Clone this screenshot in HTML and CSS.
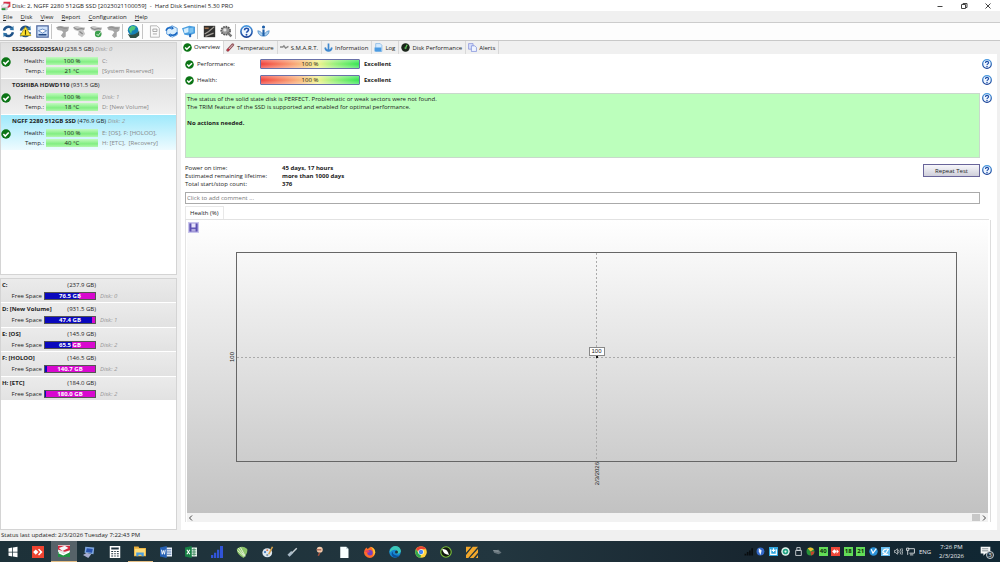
FILE: index.html
```html
<!DOCTYPE html>
<html lang="en">
<head>
<meta charset="utf-8">
<title>Hard Disk Sentinel 5.30 PRO</title>
<link rel="stylesheet" href="styles.css">
</head>
<body>
<svg class="defs" width="0" height="0" aria-hidden="true">
  <defs>
    <linearGradient id="blue" x1="0" y1="0" x2="0" y2="1"><stop offset="0" stop-color="#4a9ae0"/><stop offset="1" stop-color="#173f95"/></linearGradient>
    <symbol id="ok" viewBox="0 0 16 16"><circle cx="8" cy="8" r="7.6" fill="#0b7415"/><path d="M3.8 8l3 3.2 5.6-5.6" fill="none" stroke="#fff" stroke-width="2.6"/></symbol>
    <symbol id="help" viewBox="0 0 16 16"><circle cx="8" cy="8" r="6.9" fill="#eef6ff" stroke="url(#blue)" stroke-width="2"/><path d="M5.6 6.4c0-3.4 5-3.2 4.900-.3 0 1.700-2.400 1.700-2.400 3.500" fill="none" stroke="#1d4da8" stroke-width="1.9"/><circle cx="8" cy="12" r="1.200" fill="#1d4da8"/></symbol>
    <symbol id="info" viewBox="0 0 16 16"><path d="M1 7c0 9 14 9 14 0l-3 1c-1 3-7 3-8 0z" fill="#a9cfef" stroke="#3b7dbc" stroke-width=".8"/><circle cx="8" cy="2.500" r="1.900" fill="#1d5ea8"/><path d="M8 5.500v8" stroke="#1d5ea8" stroke-width="2.600"/></symbol>
    <symbol id="refresh" viewBox="0 0 16 16"><path d="M13.400 9A5.600 5.600 0 0 1 4 12M2.500 7A5.600 5.600 0 0 1 12 3.800" fill="none" stroke="#1e5288" stroke-width="3"/><path d="M1.500 9.500l5 .5-4.500 5zM14.500 6.500l-5-.5L14 1z" fill="#2d74a8"/></symbol>
    <symbol id="drive" viewBox="0 0 16 16"><path d="M4 1h11v8l-4 2H4z" fill="#d93048"/><path d="M1 7l5-3 7 1-3 5H1z" fill="#f3f4f6" stroke="#b5b5bc" stroke-width=".8"/><path d="M1 10h10v4l-3 1H1z" fill="#c9ccd2"/><path d="M1 13h6" stroke="#279335" stroke-width="3"/></symbol>
    <symbol id="tool" viewBox="0 0 16 16"><path d="M0 3q5-3 10-1h6l-1 5-3 2v5l-3 2-3-3 3-4-2-2-5-1z" fill="#a6a6a6"/><path d="M2 3q4-1 8 1h4" fill="none" stroke="#8a8a8a"/></symbol>
    <symbol id="chain" viewBox="0 0 16 16"><path d="M0 3q4-3 8-1l7 1-2 4 2 4-4 4-5-3 1-4-5-2z" fill="#c6c6c6"/><path d="M1 3q3 3 6 2t7 0M8 8l4 3" fill="none" stroke="#8a8a8a" stroke-width="1.500"/></symbol>
    <symbol id="globe" viewBox="0 0 16 16"><circle cx="7.500" cy="6.500" r="6.500" fill="#1680b4"/><path d="M2 5l4-4 5 1-2 4-3 1-1 4z" fill="#53c87a"/><path d="M1 11q8 3 14-4v6l-4 3H4z" fill="#315044"/></symbol>
    <symbol id="page" viewBox="0 0 16 16"><path d="M3 1h8l3 3v11H3z" fill="#fafafa" stroke="#aaa"/><path d="M6 5h5v3H6zM6 11h5" fill="none" stroke="#999"/></symbol>
    <symbol id="screens" viewBox="0 0 16 16"><path d="M0 4l9-3 7 1v8l-7 3-6-1z" fill="#4a9ee0"/><path d="M2 5l6-2v6l-5 1z" fill="#d5eefd"/><path d="M9 4l5-1v6l-5 1z" fill="#7cc3f1"/><path d="M10 11v4" stroke="#2466b8" stroke-width="2.500"/></symbol>
    <symbol id="temp" viewBox="0 0 16 16"><path d="M3 13L12 3" stroke="#93555b" stroke-width="5" stroke-linecap="round"/><path d="M4 12L12 3" stroke="#f1dede" stroke-width="1.500"/><circle cx="4" cy="12" r="2" fill="#c3273c"/></symbol>
    <symbol id="copy" viewBox="0 0 16 16"><path d="M1 1h8v10H1z" fill="#d8e0fb" stroke="#6c79d6"/><path d="M6 5h6l3 3v7H6z" fill="#eff4ff" stroke="#596fd0"/></symbol>
  </defs>
</svg>

<header class="titlebar">
  <svg class="i10"><use href="#drive"/></svg>
  <span class="caption">Disk: 2, NGFF 2280 512GB SSD [2023021100059] &nbsp;- &nbsp;Hard Disk Sentinel 5.30 PRO</span>
  <div class="winctl">
    <button aria-label="Minimize"><svg viewBox="0 0 8 8"><path d="M1.500 4.500h5"/></svg></button>
    <button aria-label="Restore"><svg viewBox="0 0 8 8"><path d="M1.500 2.500h4v4h-4zM3 2.500v-1h4v4H5.500"/></svg></button>
    <button aria-label="Close"><svg viewBox="0 0 8 8"><path d="M1.500 1.500l5 5m0-5l-5 5"/></svg></button>
  </div>
</header>

<nav class="menubar">
  <button><u>F</u>ile</button><button><u>D</u>isk</button><button><u>V</u>iew</button><button><u>R</u>eport</button><button><u>C</u>onfiguration</button><button><u>H</u>elp</button>
</nav>

<div class="toolbar">
  <button aria-label="Refresh"><svg class="i13"><use href="#refresh"/></svg></button>
  <button aria-label="Refresh now"><svg class="i13" viewBox="0 0 16 16"><use href="#refresh"/><path d="M8 2l6.500 11h-13z" fill="#ffe22d" stroke="#a79313"/><path d="M8 6v6" stroke="#4b4200" stroke-width="1.500"/></svg></button>
  <button aria-label="Disk report"><svg class="i13" viewBox="0 0 16 16"><path d="M1 1h14v14H1z" fill="#cfe2fa" stroke="#4d679e" stroke-width="1.500"/><path d="M3 7l5-2 5 2-5 3z" fill="#fff" stroke="#537bb9"/><path d="M3 12h10" stroke="#224884" stroke-width="2"/></svg></button>
  <i class="sep"></i>
  <button aria-label="Short test"><svg class="i13"><use href="#tool"/></svg></button>
  <button aria-label="Extended test"><svg class="i13"><use href="#chain"/></svg></button>
  <button aria-label="Surface test"><svg class="i13" viewBox="0 0 16 16"><use href="#chain"/><circle cx="10" cy="11" r="4" fill="#3aa04b"/><path d="M8 11l2 2 3-4" fill="none" stroke="#fff"/></svg></button>
  <button aria-label="Seek test"><svg class="i13"><use href="#tool"/></svg></button>
  <i class="sep"></i>
  <button aria-label="Online"><svg class="i13"><use href="#globe"/></svg></button>
  <i class="sep wide"></i>
  <button aria-label="Report"><svg class="i13"><use href="#page"/></svg></button>
  <button aria-label="Send report"><svg class="i13" viewBox="0 0 16 16"><path d="M2 4l7-3 6 3v8l-6 3-7-4z" fill="#d8edfc" stroke="#4d93d8"/><path d="M1 7q3-5 7-3M15 9q-3 5-8 3" fill="none" stroke="#1766c2" stroke-width="2"/><path d="M8 1v5l3-2zM7 15v-5l-3 2z" fill="#1766c2"/></svg></button>
  <button aria-label="Network"><svg class="i13"><use href="#screens"/></svg></button>
  <i class="sep wide"></i>
  <button aria-label="Disk panel"><svg class="i13" viewBox="0 0 16 16"><path d="M1 1h14v14H1z" fill="#30302f"/><path d="M2 11l5-3 7-6M3 14l10-4" stroke="#a5a09a" stroke-width="1.500"/><path d="M2 4h5" stroke="#9a6a48" stroke-width="2"/></svg></button>
  <button aria-label="Settings"><svg class="i13" viewBox="0 0 16 16"><ellipse cx="7" cy="7" rx="5.500" ry="5" fill="#999" stroke="#555" stroke-width="2" stroke-dasharray="2 1"/><circle cx="6" cy="6" r="2" fill="#e5e5e5"/><path d="M9 9l5 5" stroke="#777" stroke-width="3"/></svg></button>
  <i class="sep"></i>
  <button aria-label="Help"><svg class="i13"><use href="#help"/></svg></button>
  <button aria-label="About"><svg class="i13"><use href="#info"/></svg></button>
</div>

<main class="main">
  <aside class="side">
    <section class="panel disks">
      <article class="disk">
        <h3>ES256GSSD25SAU <span>(238.5 GB)</span> <em>Disk: 0</em></h3>
        <div class="facts"><svg class="i10 state"><use href="#ok"/></svg>
          <span class="k">Health:</span><span class="meter">100 %</span><span class="v">C:</span>
          <span class="k">Temp.:</span><span class="meter">21 °C</span><span class="v">[System Reserved]</span></div>
      </article>
      <article class="disk">
        <h3>TOSHIBA HDWD110 <span>(931.5 GB)</span></h3>
        <div class="facts"><svg class="i10 state"><use href="#ok"/></svg>
          <span class="k">Health:</span><span class="meter">100 %</span><span class="v"><em>Disk: 1</em></span>
          <span class="k">Temp.:</span><span class="meter">18 °C</span><span class="v">D: [New Volume]</span></div>
      </article>
      <article class="disk selected">
        <h3>NGFF 2280 512GB SSD <span>(476.9 GB)</span> <em>Disk: 2</em></h3>
        <div class="facts"><svg class="i10 state"><use href="#ok"/></svg>
          <span class="k">Health:</span><span class="meter">100 %</span><span class="v">E: [OS], F: [HOLOO],</span>
          <span class="k">Temp.:</span><span class="meter">40 °C</span><span class="v">H: [ETC],&nbsp; [Recovery]</span></div>
      </article>
    </section>
    <section class="panel volumes">
      <div class="vols">
        <article class="vol"><b>C:</b><span class="size">(237.9 GB)</span><span class="k">Free Space</span><span class="free" style="--used:68%">76.5 GB</span><em>Disk: 0</em></article>
        <article class="vol"><b>D: [New Volume]</b><span class="size">(931.5 GB)</span><span class="k">Free Space</span><span class="free" style="--used:95%">47.4 GB</span><em>Disk: 1</em></article>
        <article class="vol"><b>E: [OS]</b><span class="size">(145.9 GB)</span><span class="k">Free Space</span><span class="free" style="--used:55%">65.5 GB</span><em>Disk: 2</em></article>
        <article class="vol"><b>F: [HOLOO]</b><span class="size">(146.5 GB)</span><span class="k">Free Space</span><span class="free" style="--used:4%">140.7 GB</span><em>Disk: 2</em></article>
        <article class="vol"><b>H: [ETC]</b><span class="size">(184.0 GB)</span><span class="k">Free Space</span><span class="free" style="--used:2%">180.0 GB</span><em>Disk: 2</em></article>
      </div>
    </section>
  </aside>

  <section class="detail">
    <div class="tabs">
      <button class="tab active"><svg class="i9"><use href="#ok"/></svg>Overview</button>
      <button class="tab"><svg class="i9"><use href="#temp"/></svg>Temperature</button>
      <button class="tab"><svg class="i9" viewBox="0 0 16 16"><path d="M0 7h5l2-2 3 4 5-3" fill="none" stroke="#888" stroke-width="2.500"/></svg>S.M.A.R.T.</button>
      <button class="tab"><svg class="i9" viewBox="0 0 16 16"><path d="M8 1v13M2 8q1 6 6 6t6-6" fill="none" stroke="#3f88cf" stroke-width="3"/></svg>Information</button>
      <button class="tab"><svg class="i9" viewBox="0 0 16 16"><path d="M3 1h8l3 3v11H3z" fill="#d5ebff" stroke="#68a5dd"/><path d="M1 8h12v7H1z" fill="#4b9be2"/></svg>Log</button>
      <button class="tab"><svg class="i9" viewBox="0 0 16 16"><circle cx="8" cy="8" r="7.500" fill="#1a251a"/><path d="M8 9l3-6" stroke="#62d95c" stroke-width="2"/><circle cx="8" cy="9" r="2" fill="#59a85b"/></svg>Disk Performance</button>
      <button class="tab"><svg class="i9"><use href="#copy"/></svg>Alerts</button>
    </div>
    <div class="page">
      <div class="row"><div class="rate"><svg class="i9"><use href="#ok"/></svg><span>Performance:</span><span class="grade">100 %</span><b>Excellent</b></div><button class="q" aria-label="Help"><svg class="i10"><use href="#help"/></svg></button></div>
      <div class="row"><div class="rate"><svg class="i9"><use href="#ok"/></svg><span>Health:</span><span class="grade">100 %</span><b>Excellent</b></div><button class="q" aria-label="Help"><svg class="i10"><use href="#help"/></svg></button></div>
      <div class="row status-row">
        <div class="verdict"><p>The status of the solid state disk is PERFECT. Problematic or weak sectors were not found.</p><p>The TRIM feature of the SSD is supported and enabled for optimal performance.</p><p class="act">No actions needed.</p></div>
        <button class="q" aria-label="Help"><svg class="i10"><use href="#help"/></svg></button>
      </div>
      <div class="row stat-row">
        <div class="stats">
          <dl><dt>Power on time:</dt><dd>45 days, 17 hours</dd><dt>Estimated remaining lifetime:</dt><dd>more than 1000 days</dd><dt>Total start/stop count:</dt><dd>376</dd></dl>
          <button class="repeat">Repeat Test</button>
        </div>
        <button class="q" aria-label="Help"><svg class="i10"><use href="#help"/></svg></button>
      </div>
      <div class="row comment-row"><input class="comment" type="text" aria-label="Comment" placeholder="Click to add comment ..."></div>
      <div class="subtabs"><button class="subtab">Health (%)</button></div>
      <div class="frame">
        <div class="chart">
          <button class="save" aria-label="Save chart"><svg viewBox="0 0 16 16"><path d="M0 0h16v16H0z" fill="#c9c5ec"/><path d="M2 2h12v12H2z" fill="#5b4fb2"/><path d="M5 2h6v6H5z" fill="#e6e3fa"/><path d="M5 10h6v4H5z" fill="#b3abe0"/></svg></button>
          <div class="plot">
            <span class="ylab">100</span><span class="point"></span><span class="tip">100</span><span class="xlab">2/3/2026</span>
          </div>
        </div>
        <div class="hscroll"><button aria-label="Scroll left"><svg viewBox="0 0 8 8"><path d="M5 1.500L2.500 4 5 6.500"/></svg></button><i class="thumb"></i><button aria-label="Scroll right"><svg viewBox="0 0 8 8"><path d="M3 1.500L5.500 4 3 6.500"/></svg></button></div>
      </div>
    </div>
  </section>
</main>

<footer class="statusbar">Status last updated: 2/3/2026 Tuesday 7:22:43 PM</footer>

<div class="taskbar">
  <div class="apps">
    <button aria-label="Start"><svg viewBox="0 0 16 16"><path d="M2 3l5-1v5.500H2zM8 2l6-1v6.500H8zM2 8.500h5V14l-5-1zM8 8.500h6V15l-6-1z" fill="#fff"/></svg></button>
    <button aria-label="AnyDesk"><svg viewBox="0 0 16 16"><path d="M0 0h16v16H0z" fill="#ef4431"/><path d="M1.500 8L5 4.500 8.500 8 5 11.500z" fill="#fff"/><path d="M8 4.500l1.500-1L14 8l-4.500 4.500L8 11.500 11 8z" fill="#fff"/></svg></button>
    <button class="current" aria-label="Hard Disk Sentinel"><svg viewBox="0 0 16 16"><path d="M0 0h16v16H0z" fill="#e9e5e5"/><path d="M0 1h16v6L9 9 0 6z" fill="#d3263c"/><path d="M1 4l8-3 5 3-8 4z" fill="#f5f7f9"/><path d="M0 16V9l6 3 10-3v7z" fill="#209343"/><path d="M1 10l6 3 8-4" stroke="#fff" stroke-width="2" fill="none"/></svg></button>
    <button aria-label="Remote desktop"><svg viewBox="0 0 16 16"><path d="M3 1l12 1-1 9-12-2z" fill="#7fa6dd"/><path d="M5 3l8 1-1 5-8-1z" fill="#2852ae"/><path d="M0 12l5-3 6 2-4 5z" fill="#a7add0"/></svg></button>
    <button aria-label="Calculator"><svg viewBox="0 0 16 16"><path d="M1 0h14v16H1z" fill="#fff"/><path d="M3 2h10v2.500H3zM3 6.500h2.500V8H3zM7 6.500h2V8H7zM10.500 6.500H13V8h-2.500zM3 9.500h2.500V11H3zM7 9.500h2V11H7zM10.500 9.500H13V11h-2.500zM3 12.500h2.500V14H3zM7 12.500h2V14H7zM10.500 12.500H13V14h-2.500z" fill="#21333f"/></svg></button>
    <button class="open" aria-label="File Explorer"><svg viewBox="0 0 16 16"><path d="M0 2h6l1 2h9v11H0z" fill="#e9ae3c"/><path d="M1 5h14v9H1z" fill="#ffdc79"/><path d="M3 15v-5h10v5h-3v-2H6v2z" fill="#4c9ede"/></svg></button>
    <button aria-label="Word"><svg viewBox="0 0 16 16"><path d="M8 2h8v12H8z" fill="#e9f0fa"/><path d="M9 5h6M9 8h6M9 11h6" stroke="#2b579a"/><path d="M0 2l9-2v16l-9-2z" fill="#2660b3"/><path d="M2 5l1 6 1.500-5L6 11l1-6" fill="none" stroke="#fff" stroke-width="1.200"/></svg></button>
    <button aria-label="Excel"><svg viewBox="0 0 16 16"><path d="M8 2h8v12H8z" fill="#e8f6ed"/><path d="M9 5h6M9 8h6M9 11h6M12 3v10" stroke="#217346"/><path d="M0 2l9-2v16l-9-2z" fill="#168044"/><path d="M2.500 5l4 6m0-6l-4 6" stroke="#fff" stroke-width="1.500"/></svg></button>
    <button aria-label="Signal"><svg viewBox="0 0 16 16"><path d="M0 12h3v4H0zM4 9h3v7H4zM8 5h3v11H8zM12 0h4v16h-4z" fill="#3154d8"/></svg></button>
    <button aria-label="CorelDRAW"><svg viewBox="0 0 16 16"><path d="M1 4Q8-2 15 4q1 6-5 12Q1 11 1 4" fill="#8cc46a"/><path d="M3 3l9 11M6 2l6 11M2 6l9 8" stroke="#e5f4d8" stroke-width="1.300"/></svg></button>
    <button aria-label="Paint"><svg viewBox="0 0 16 16"><ellipse cx="7" cy="9" rx="6.500" ry="6" fill="#dce7f0"/><circle cx="4" cy="8" r="1.500" fill="#4479bb"/><circle cx="7" cy="5.500" r="1.300" fill="#dc7447"/><circle cx="7" cy="12" r="1.500" fill="#829aac"/><path d="M9 11l5-10" stroke="#dba34c" stroke-width="2"/></svg></button>
    <button aria-label="Screwdriver"><svg viewBox="0 0 16 16"><path d="M2 13l5-5" stroke="#a9bac6" stroke-width="4"/><path d="M7 9l6-6" stroke="#cad2d5" stroke-width="2"/></svg></button>
    <button aria-label="Pin"><svg viewBox="0 0 16 16"><circle cx="9" cy="5" r="4" fill="#f1c8aa"/><path d="M5 5h6" stroke="#b06e5b" stroke-width="2"/><path d="M9 9l-2 4" stroke="#aa533e" stroke-width="2"/></svg></button>
    <button aria-label="Notepad"><svg viewBox="0 0 16 16"><path d="M3 1h8l3 3v12H3z" fill="#f8ffff"/><path d="M11 1v3h3" fill="#b7cbd0"/></svg></button>
    <button aria-label="Firefox"><svg viewBox="0 0 16 16"><path d="M3 2l2 2q2-2 4-3 6 2 6 8-1 6-7 7-7-1-8-7 0-4 3-7z" fill="#ff6b2a"/><path d="M9 1q6 2 6 8l-3 5Q14 6 9 1" fill="#ffc832"/><circle cx="8" cy="9" r="3.600" fill="#7340c3"/><path d="M1 7q4-3 7 1l-3 1z" fill="#f23b5c"/></svg></button>
    <button aria-label="Edge"><svg viewBox="0 0 16 16"><circle cx="8" cy="8" r="7.700" fill="#1688d2"/><path d="M1 7Q2 1 8 0q7 0 8 7-1 4-6 3 2-5-2-5-5 0-7 4" fill="#3bc7b8"/><path d="M5 7q-1 6 9 6-5 4-9 1-3-3 0-7" fill="#0b519c"/><circle cx="10" cy="8" r="2" fill="#203540"/></svg></button>
    <button aria-label="Chrome"><svg viewBox="0 0 16 16"><circle cx="8" cy="8" r="7.800" fill="#ffd13b"/><path d="M1 4Q4 0 8 .2q5 0 7 4H8L5 8z" fill="#e84235"/><path d="M1 4l4 6 3 2-1 4Q1 15 .2 8 .2 6 1 4" fill="#31a852"/><circle cx="8" cy="8" r="3.700" fill="#fff"/><circle cx="8" cy="8" r="2.900" fill="#4285f4"/></svg></button>
    <button aria-label="Corel tools"><svg viewBox="0 0 16 16"><circle cx="8" cy="8" r="7" fill="#12180f" stroke="#7cc13b" stroke-width="1.500"/><path d="M3 4q7-1 9 8-8-1-9-8" fill="#fff"/></svg></button>
    <button aria-label="Stripes"><svg viewBox="0 0 16 16"><path d="M0 1h7L0 9zM9 1h7L3 16H0v-4zM16 4v5l-6 7H5zM16 12v4h-3z" fill="#f2a82c"/></svg></button>
    <button aria-label="Device"><svg viewBox="0 0 16 16"><path d="M3 6l7-1 4 4-4 2-6-2z" fill="#66747b"/><path d="M3 6l7 1" stroke="#a0abb0"/></svg></button>
  </div>
  <div class="tray">
    <div class="trayicons">
      <span><svg viewBox="0 0 16 16"><path d="M1 12h3v3H1zM5 9h3v6H5zM9 6h3v9H9zM13 2h3v13h-3z" fill="#080c0f"/></svg></span>
      <span><svg viewBox="0 0 16 16"><circle cx="8" cy="8" r="7" fill="#3368c9"/><path d="M5 2l5 4-2 8-3-6z" fill="#f0f6ff"/></svg></span>
      <span><svg viewBox="0 0 16 16"><path d="M0 0h16v16H0z" fill="#30a5dd"/><path d="M3 4v9h10V4M8 2v7M5 6h6" fill="none" stroke="#fff" stroke-width="2"/></svg></span>
      <span><svg viewBox="0 0 16 16"><circle cx="8" cy="8" r="7.500" fill="#e5f5ef"/><circle cx="8" cy="8" r="3.500" fill="none" stroke="#20a083" stroke-width="3"/></svg></span>
      <span><svg viewBox="0 0 16 16"><path d="M5 1h6v5H5zM3 6h10v9H3z" fill="none" stroke="#d8dde0" stroke-width="1.500"/></svg></span>
      <span><svg viewBox="0 0 16 16"><circle cx="8" cy="8" r="7" fill="#27923a"/><path d="M8 8L3 2q7-3 11 2z" fill="#efbd32"/><path d="M8 8h7q-1 6-6 7z" fill="#c8412e"/></svg></span>
      <span class="num">40</span>
      <span><svg viewBox="0 0 16 16"><path d="M0 0h16v16H0z" fill="#ed4638"/><path d="M2 8l4-4 4 4-4 4zM10 4l4 4-4 4z" fill="#fff"/></svg></span>
      <span class="num">18</span>
      <span class="num">21</span>
      <span><svg viewBox="0 0 16 16"><circle cx="8" cy="8" r="7.500" fill="#2a91d7"/><path d="M4 4l3 7 6-8" fill="none" stroke="#fff" stroke-width="2"/></svg></span>
      <span><svg viewBox="0 0 16 16"><path d="M0 0h16v16H0z" fill="#65bbed"/><path d="M3 9q2-7 10-5l-5 8zM3 13h10" fill="none" stroke="#fff" stroke-width="2"/></svg></span>
      <span><svg viewBox="0 0 16 16"><path d="M1 6h2l3-3v10L3 10H1zM8 5q2 3 0 6M11 3q3 5 0 10M14 2q3 6 0 12" fill="none" stroke="#e6eaec" stroke-width="1.200"/></svg></span>
      <span><svg viewBox="0 0 16 16"><path d="M4 3h11v8H6M1 2h4v4H1zM3 6v8M7 14h6" fill="none" stroke="#e6eaec" stroke-width="1.500"/></svg></span>
    </div>
    <span class="lang">ENG</span>
    <span class="clock">7:26 PM<br>2/3/2026</span>
    <button class="notes" aria-label="3 notifications"><svg viewBox="0 0 16 16"><path d="M1 1h14v10H8l-3 3v-3H1z" fill="#f4f6f6"/><path d="M3 4h9M3 7h9" stroke="#5b676d"/></svg><span>3</span></button>
  </div>
</div>
</body>
</html>
```
FILE: styles.css
```css
* { box-sizing: border-box; }
html, body { height: 100%; }
body {
  margin: 0;
  display: flex;
  flex-direction: column;
  overflow: hidden;
  background: #f0f0f0;
  color: #222;
  font: 6px/8px "Open Sans", "Noto Sans", sans-serif;
}
button, input { font: inherit; color: inherit; }
button { margin: 0; padding: 0; border: 0; background: none; }
p, h3, dl, dd { margin: 0; }
em { color: #999; font-weight: 400; }
svg { display: block; flex: none; }
.defs { position: absolute; }
.i9 { width: 9px; height: 9px; }
.i10 { width: 10px; height: 10px; }
.i13 { width: 13px; height: 13px; }

.titlebar { display: flex; align-items: center; height: 11px; padding-left: 1px; gap: 1px; background: #fff; flex: none; }
.caption { flex: 1; }
.winctl { display: flex; }
.winctl button { display: grid; place-items: center; width: 24px; height: 11px; }
.winctl svg { width: 8px; height: 8px; fill: none; stroke: #444; }

.menubar { display: flex; align-items: center; gap: 8px; height: 12px; padding-left: 3px; border-bottom: 1px solid #ccc; flex: none; }

.toolbar { display: flex; align-items: center; height: 18px; background: #fdfdfd; border-bottom: 1px solid #c8c8c8; flex: none; }
.toolbar button { display: grid; place-items: center; width: 17px; height: 17px; }
.sep { width: 3px; height: 15px; border-left: 1px solid #c5c5c5; }
.sep.wide { width: 4px; }

.main { flex: 1; display: flex; gap: 4px; min-height: 0; padding-right: 3px; }
.side { width: 177px; flex: none; display: flex; flex-direction: column; gap: 3px; padding-top: 1px; }
.panel { background: #fff; border: 1px solid #d4d4d4; }
.disks { flex: 233; }
.volumes { flex: 252; }

.disk { height: 36px; background: linear-gradient(#e0e0e0, #f0f0f0); border-bottom: 1px solid #fff; }
.disk.selected { background: linear-gradient(#9fe9fb, #eefbff); }
.disk h3 { margin-left: 11px; font-size: 6px; line-height: 13px; white-space: nowrap; }
.disk h3 span { font-weight: 400; }
.facts { display: grid; grid-template-columns: 11px 30px 52px 1fr; grid-auto-rows: 10px; column-gap: 2px; align-items: center; }
.state { grid-row: 1 / span 2; align-self: start; margin-top: 1px; }
.k { text-align: right; }
.v { padding-left: 2px; color: #888; white-space: nowrap; }
.meter { height: 8px; background: linear-gradient(#c3fac0, #82ee82 60%, #b2f7ae); text-align: center; }

.vols { display: grid; grid-template-rows: repeat(5, 1fr); height: 122px; }
.vol { display: grid; grid-template-columns: 40px 52px 1fr; grid-template-rows: 12px 10px; column-gap: 2px; align-items: center; padding-left: 1px; background: linear-gradient(#ebebeb, #e2e2e2); border-bottom: 1px solid #fff; }
.vol b { grid-column: 1; white-space: nowrap; }
.size { grid-column: 2 / span 2; grid-row: 1; width: 52px; text-align: right; }
.vol em { padding-left: 2px; }
.free { height: 8px; color: #fff; font-weight: 700; text-align: center; border: 1px solid #555; line-height: 7px; background: linear-gradient(90deg, #0a08bd var(--used), #d808cf var(--used)); }

.detail { flex: 1; min-width: 0; display: flex; flex-direction: column; }
.tabs { display: flex; height: 13px; padding: 0 0 0 1px; }
.tab { display: flex; align-items: center; gap: 2px; padding: 0 3px 0 2px; border-right: 1px solid #d8d8d8; }
.tab.active { background: #fff; padding: 0 3px 1px 1px; }

.page { flex: 1; min-height: 0; display: flex; flex-direction: column; padding: 2px 0 8px 4px; background: #fff; }
.row { display: grid; grid-template-columns: 1fr 17px; height: 16px; align-items: center; flex: none; }
.q { display: grid; width: 10px; height: 10px; margin-left: 2px; }
.rate { display: grid; grid-template-columns: 9px 60px 100px 1fr; column-gap: 3px; align-items: center; }
.grade { height: 10px; line-height: 8px; text-align: center; border: 1px solid #6a71a8; border-radius: 1px; background: linear-gradient(rgba(255,255,255,.3), rgba(255,255,255,0) 50%, rgba(255,255,255,.3)), linear-gradient(90deg, #f2413b, #f9a876 35%, #f1f38c 58%, #9bf07a 75%, #35e552); }
.rate b { padding-left: 1px; }
.status-row { height: 66px; margin-top: 5px; align-items: start; }
.verdict { height: 65px; padding: 1px; background: #bcffbc; border: 1px solid #c9d9cc; }
.act { margin-top: 8px; font-weight: 700; }
.stat-row { height: 27px; margin-top: 3px; align-items: start; }
.stat-row .q { margin-top: 3px; }
.stats { display: flex; justify-content: space-between; align-items: flex-start; padding-top: 2px; }
.stats dl { display: grid; grid-template-columns: 97px auto; }
.stats dd { font-weight: 700; }
.repeat { width: 57px; height: 13px; border: 1px solid #686499; background: linear-gradient(#f7f7fb, #cfcfda); }
.comment-row { height: 14px; margin-top: 2px; }
.comment { width: 100%; height: 12px; padding: 0 1px; border: 1px solid #aaa; background: #fff; }
.comment::placeholder { color: #777; opacity: 1; }
.subtabs { display: flex; height: 15px; align-items: flex-end; margin-right: 8px; border-bottom: 1px solid #e2e2e2; flex: none; }
.subtab { height: 13px; padding: 0 4px; background: #fff; border: 1px solid #e8e8e8; border-bottom: 0; }
.frame { flex: 1; min-height: 0; display: flex; flex-direction: column; margin-right: 6px; padding: 0 2px 0 1px; border-left: 1px solid #e4e4e4; border-right: 1px solid #ddd; }
.chart { flex: 1; min-height: 0; position: relative; padding: 32px 31px 51px 49px; background: linear-gradient(#fff, #f4f4f4 18%, #c2c2c2); }
.save { position: absolute; left: 1px; top: 2px; width: 11px; height: 11px; }
.plot {
  position: relative;
  width: 100%;
  height: 100%;
  border: 1px solid #666;
  background:
    repeating-linear-gradient(90deg, #aaa 0 2px, transparent 2px 4px) center / 100% 1px no-repeat,
    repeating-linear-gradient(#aaa 0 2px, transparent 2px 4px) center / 1px 100% no-repeat;
}
.ylab, .xlab { position: absolute; writing-mode: vertical-rl; transform: rotate(180deg); line-height: 8px; font-family: "Liberation Sans", Arial, sans-serif; }
.ylab { right: 100%; top: 50%; margin: -5px 1px 0 0; }
.xlab { left: 50%; top: 100%; margin: 1px 0 0 -4px; }
.point { position: absolute; left: 50%; top: 50%; width: 2px; height: 2px; margin: -1px; background: #111; }
.tip { position: absolute; left: 50%; top: 50%; width: 16px; height: 9px; margin: -10px 0 0 -8px; border: 1px solid #888; background: #fff; text-align: center; line-height: 7px; font-family: "Liberation Sans", Arial, sans-serif; }
.hscroll { display: flex; align-items: center; height: 9px; background: #f2f2f2; flex: none; }
.hscroll button { width: 8px; height: 8px; }
.hscroll svg { width: 8px; height: 8px; fill: none; stroke: #444; }
.thumb { width: 8px; height: 7px; margin-left: auto; background: #c8c8c8; }

.statusbar { height: 11px; padding-left: 1px; line-height: 11px; flex: none; }

.taskbar { display: flex; justify-content: space-between; height: 21px; background: linear-gradient(90deg, #1d3139, #22363f 50%, #182630 75%, #102733); color: #e9edef; flex: none; }
.apps { display: grid; grid-template-columns: repeat(20, 1fr); width: 510px; }
.apps button { display: grid; place-items: center; }
.apps svg { width: 12px; height: 12px; }
.apps .current { background: #566269; border-bottom: 1px solid #e3bd84; }
.apps .open { border-bottom: 1px solid #e3bd84; }
.tray { display: flex; align-items: center; }
.trayicons { display: grid; grid-template-columns: repeat(14, 1fr); width: 175px; justify-items: center; align-items: center; }
.trayicons svg { width: 9px; height: 9px; }
.num { width: 9px; height: 9px; background: #63dc58; color: #0b2a0b; font-weight: 700; line-height: 9px; text-align: center; }
.lang { width: 16px; text-align: center; }
.clock { width: 37px; text-align: center; line-height: 9px; }
.notes { position: relative; width: 30px; height: 14px; display: grid; place-items: center; }
.notes svg { width: 11px; height: 11px; }
.notes span { position: absolute; right: 6px; bottom: 0; width: 8px; height: 8px; border: 1px solid #c5cccf; border-radius: 50%; background: #23353f; line-height: 6px; }
```
